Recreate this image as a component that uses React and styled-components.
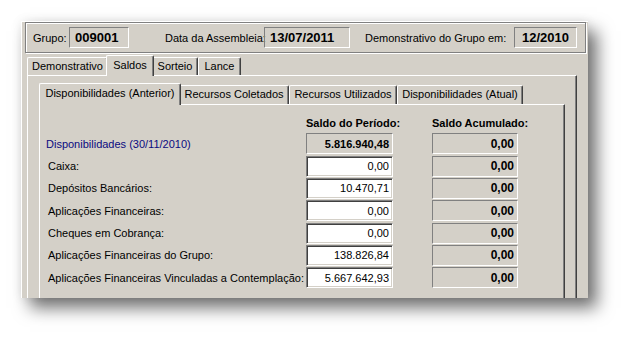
import React from 'react';
import styled, { createGlobalStyle } from 'styled-components';

const FACE = '#D4D0C8';
const SHADOW = '#808080';
const DARK = '#404040';

const GlobalStyle = createGlobalStyle`
    html, body {
        margin: 0;
        padding: 0;
        background: #fff;
    }
    body {
        font-family: "Liberation Sans", Arial, sans-serif;
        font-size: 11px;
        color: #000;
    }
`;

const Page = styled.div`
    width: 632px;
    height: 341px;
    padding: 21px 0 0 21px;
    box-sizing: border-box;
    overflow: hidden;
`;

const Window = styled.div`
    width: 567px;
    height: 277px;
    box-sizing: border-box;
    background: ${FACE};
    border-top: 1px solid #fff;
    border-left: 1px solid #fff;
    padding: 0 2px 0 3px;
    box-shadow: 0 0 10px rgba(0, 0, 0, 0.08), 9px 10px 16px rgba(0, 0, 0, 0.55);
    overflow: hidden;
    display: flex;
    flex-direction: column;
`;

const Header = styled.div`
    flex-shrink: 0;
    height: 31px;
    box-sizing: border-box;
    border: 1px solid ${SHADOW};
    box-shadow: 1px 1px 0 #fff, inset 1px 1px 0 #fff;
    display: flex;
    align-items: center;
`;

const HeaderLabel = styled.span`
    width: ${p => p.$w}px;
    margin-left: ${p => p.$ml || 0}px;
    white-space: nowrap;
`;

const HeaderBox = styled.div`
    width: ${p => p.$w}px;
    height: 21px;
    box-sizing: border-box;
    border: 1px solid;
    border-color: ${SHADOW} #fff #fff ${SHADOW};
    display: flex;
    align-items: center;
    justify-content: ${p => (p.$center ? 'center' : 'flex-start')};
    padding-left: ${p => (p.$center ? 0 : 5)}px;
    font-weight: bold;
    font-size: 13px;
`;

const TabStrip = styled.div`
    flex-shrink: 0;
    display: flex;
    align-items: flex-end;
    height: ${p => p.$h}px;
    padding-left: 2px;
    position: relative;
    z-index: 1;
`;

const Tab = styled.div`
    width: ${p => (p.$active ? p.$w + 4 : p.$w)}px;
    height: ${p => (p.$active ? p.$h + 3 : p.$h)}px;
    margin: ${p => (p.$active ? '0 -2px -1px -2px' : '0')};
    padding-top: ${p => (p.$active ? 3 : 2)}px;
    box-sizing: border-box;
    background: ${FACE};
    border-top: 1px solid #fff;
    border-left: 1px solid #fff;
    border-right: 1px solid ${DARK};
    box-shadow: inset -1px 0 0 ${SHADOW};
    border-radius: 2px 2px 0 0;
    position: relative;
    z-index: ${p => (p.$active ? 2 : 0)};
    text-align: center;
    line-height: 13px;
    white-space: nowrap;
`;

const Panel = styled.div`
    width: ${p => p.$w}px;
    height: ${p => p.$height}px;
    margin-left: ${p => p.$ml || 0}px;
    flex-shrink: 0;
    box-sizing: border-box;
    border-top: 1px solid #fff;
    border-left: 1px solid #fff;
    border-right: 1px solid ${DARK};
    box-shadow: inset -1px 0 0 ${SHADOW};
    padding: ${p => p.$pad};
`;

const Table = styled.div`
    display: grid;
    grid-template-columns: 260px 87px 39px 86px;
    grid-template-rows: 16px repeat(7, 21px);
    row-gap: 1.33px;
`;

const ColHead = styled.div`
    grid-column: ${p => p.$col};
    font-weight: bold;
    line-height: 13px;
    padding-top: 1px;
    white-space: nowrap;
`;

const RowLabel = styled.div`
    grid-column: 1;
    align-self: center;
    padding-left: ${p => (p.$total ? 0 : 2)}px;
    color: ${p => (p.$total ? '#0A0A80' : '#000')};
    white-space: nowrap;
`;

const StaticValue = styled.div`
    grid-column: ${p => p.$col};
    box-sizing: border-box;
    border: 1px solid;
    border-color: ${SHADOW} #fff #fff ${SHADOW};
    display: flex;
    align-items: center;
    justify-content: flex-end;
    padding-right: 3px;
    font-weight: bold;
    font-size: ${p => (p.$big ? 12 : 11)}px;
`;

const EditValue = styled.div`
    grid-column: 2;
    box-sizing: border-box;
    background: #fff;
    border: 1px solid;
    border-color: ${SHADOW} #fff #fff ${SHADOW};
    box-shadow: inset 1px 1px 0 ${DARK}, inset -1px -1px 0 ${FACE};
    display: flex;
    align-items: center;
    justify-content: flex-end;
    padding-right: 3px;
`;

const outerTabs = [
    { name: 'Demonstrativo', w: 81 },
    { name: 'Saldos', w: 44, active: true },
    { name: 'Sorteio', w: 46 },
    { name: 'Lance', w: 43 },
];

const innerTabs = [
    { name: 'Disponibilidades (Anterior)', w: 138, active: true },
    { name: 'Recursos Coletados', w: 110 },
    { name: 'Recursos Utilizados', w: 108 },
    { name: 'Disponibilidades (Atual)', w: 126 },
];

const rows = [
    { label: 'Disponibilidades (30/11/2010)', periodo: '5.816.940,48', total: true },
    { label: 'Caixa:', periodo: '0,00' },
    { label: 'Depósitos Bancários:', periodo: '10.470,71' },
    { label: 'Aplicações Financeiras:', periodo: '0,00' },
    { label: 'Cheques em Cobrança:', periodo: '0,00' },
    { label: 'Aplicações Financeiras do Grupo:', periodo: '138.826,84' },
    { label: 'Aplicações Financeiras Vinculadas a Contemplação:', periodo: '5.667.642,93' },
];

export default function App() {
    return (
        <Page>
            <GlobalStyle />
            <Window>
                <Header>
                    <HeaderLabel $ml={7} $w={36}>Grupo:</HeaderLabel>
                    <HeaderBox $w={60}>009001</HeaderBox>
                    <HeaderLabel $ml={36} $w={99}>Data da Assembleia:</HeaderLabel>
                    <HeaderBox $w={86}>13/07/2011</HeaderBox>
                    <HeaderLabel $ml={15} $w={149}>Demonstrativo do Grupo em:</HeaderLabel>
                    <HeaderBox $w={63} $center>12/2010</HeaderBox>
                </Header>

                <TabStrip $h={22}>
                    {outerTabs.map(t => (
                        <Tab key={t.name} $w={t.w} $h={18} $active={t.active}>{t.name}</Tab>
                    ))}
                </TabStrip>
                <Panel $w={550} $height={240} $ml={2} $pad="7px 0 0 11px">
                    <TabStrip $h={21}>
                        {innerTabs.map(t => (
                            <Tab key={t.name} $w={t.w} $h={19} $active={t.active}>{t.name}</Tab>
                        ))}
                    </TabStrip>
                    <Panel $w={526} $height={220} $pad="11px 0 0 6px">
                        <Table>
                            <ColHead $col={2}>Saldo do Período:</ColHead>
                            <ColHead $col={4}>Saldo Acumulado:</ColHead>
                            {rows.map(r => (
                                <React.Fragment key={r.label}>
                                    <RowLabel $total={r.total}>{r.label}</RowLabel>
                                    {r.total
                                        ? <StaticValue $col={2}>{r.periodo}</StaticValue>
                                        : <EditValue>{r.periodo}</EditValue>}
                                    <StaticValue $col={4} $big>0,00</StaticValue>
                                </React.Fragment>
                            ))}
                        </Table>
                    </Panel>
                </Panel>
            </Window>
        </Page>
    );
}
